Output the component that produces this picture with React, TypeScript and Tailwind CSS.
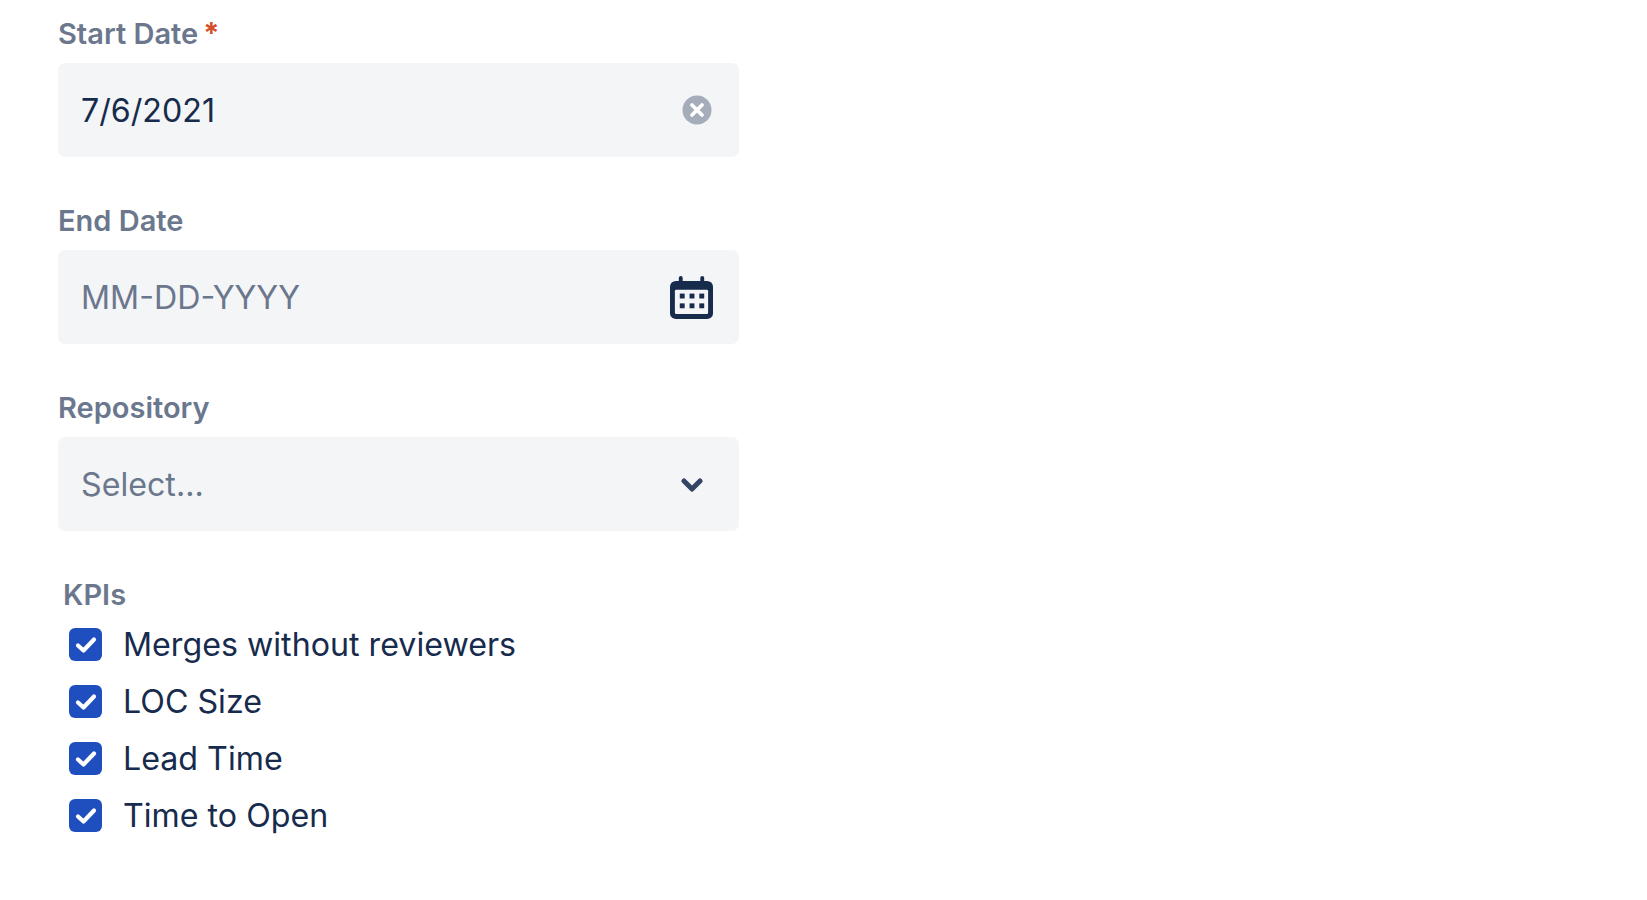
const font = "font-['Inter','Liberation_Sans',sans-serif]";

function Label({ text, required }: { text: string; required?: boolean }) {
  return (
    <div className="h-[34px] flex items-center text-[29px] font-semibold leading-none text-[#6b778c]">
      {text}
      {required && <span className="ml-[5px] text-[#d4502a] font-bold self-start mt-[2px]">*</span>}
    </div>
  );
}

function Field({ value, placeholder, children }: { value?: string; placeholder?: string; children: React.ReactNode }) {
  return (
    <div className="mt-[13px] h-[94px] w-[681px] rounded-[7px] bg-[#f4f5f7] pl-[23px] flex items-center justify-between">
      <span className={`mt-[2px] text-[32.2px] leading-none ${value ? "text-[#172b4d]" : "text-[#6b778c]"}`}>
        {value ?? placeholder}
      </span>
      {children}
    </div>
  );
}

function ClearIcon() {
  return (
    <svg width="30" height="30" viewBox="0 0 30 30" className="mr-[27px]">
      <circle cx="15" cy="15" r="14.5" fill="#a5adba" />
      <path d="M10 10l10 10M20 10L10 20" stroke="#fff" strokeWidth="3.8" strokeLinecap="round" />
    </svg>
  );
}

function CalendarIcon() {
  return (
    <svg width="43" height="43" viewBox="0 0 44 44" className="mr-[26px]">
      <path d="M6 5h32a6 6 0 0 1 6 6v27a6 6 0 0 1-6 6H6a6 6 0 0 1-6-6V11a6 6 0 0 1 6-6z" fill="#172b4d" />
      <rect x="9" y="0" width="4" height="9" rx="2" fill="#172b4d" />
      <rect x="31" y="0" width="4" height="9" rx="2" fill="#172b4d" />
      <rect x="5" y="14" width="34" height="25" rx="1.5" fill="#f4f5f7" />
      {[10, 20, 30].map((x) =>
        [18, 28].map((y) => <rect key={`${x}-${y}`} x={x} y={y} width="5" height="5" fill="#172b4d" />),
      )}
    </svg>
  );
}

function ChevronIcon() {
  return (
    <svg width="22" height="14" viewBox="0 0 22 14" className="mr-[36px] mt-[2px]">
      <path d="M3 3l8 8 8-8" fill="none" stroke="#344563" strokeWidth="5" strokeLinecap="round" strokeLinejoin="round" />
    </svg>
  );
}

function Kpi({ text }: { text: string }) {
  return (
    <div className="h-[57px] flex items-center">
      <span className="ml-[11px] w-[33px] h-[33px] rounded-[6px] bg-[#1f4fbf] flex items-center justify-center shrink-0">
        <svg width="22" height="18" viewBox="0 0 22 18">
          <path d="M3 9.5l5.5 5L19 3.5" fill="none" stroke="#fff" strokeWidth="4.2" strokeLinecap="round" strokeLinejoin="round" />
        </svg>
      </span>
      <span className="ml-[21px] mt-[2px] text-[32.2px] leading-none text-[#172b4d]">{text}</span>
    </div>
  );
}

export default function App() {
  return (
    <div className={`${font} min-h-[900px] bg-white pl-[58px] pt-[16px]`}>
      <Label text="Start Date" required />
      <Field value="7/6/2021">
        <ClearIcon />
      </Field>

      <div className="mt-[46px]">
        <Label text="End Date" />
        <Field placeholder="MM-DD-YYYY">
          <CalendarIcon />
        </Field>
      </div>

      <div className="mt-[46px]">
        <Label text="Repository" />
        <Field placeholder="Select...">
          <ChevronIcon />
        </Field>
      </div>

      <div className="mt-[46px]">
        <div className="pl-[5px]">
          <Label text="KPIs" />
        </div>
        <div className="mt-[5px]">
          {["Merges without reviewers", "LOC Size", "Lead Time", "Time to Open"].map((kpi) => (
            <Kpi key={kpi} text={kpi} />
          ))}
        </div>
      </div>
    </div>
  );
}
